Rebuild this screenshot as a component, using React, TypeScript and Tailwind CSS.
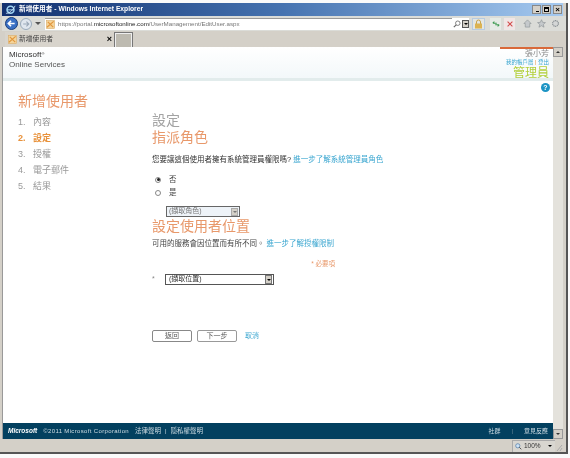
import React from "react";

const font = "font-['Liberation_Sans','Noto_Sans_CJK_TC',sans-serif]";

function Step({ n, t, active }: { n: string; t: string; active?: boolean }) {
  return (
    <div className={`flex h-4 items-center text-[9px] ${active ? "font-bold text-[#e8923c]" : "text-[#999]"}`}>
      <span className="w-[15px]">{n}</span>
      <span>{t}</span>
    </div>
  );
}

function Radio({ on, label }: { on?: boolean; label: string }) {
  return (
    <div className="flex h-[13px] items-center text-[7.5px] text-[#444]">
      <span className="flex h-[6px] w-[6px] items-center justify-center rounded-full border border-[#888] bg-white">
        {on && <span className="h-[3px] w-[3px] rounded-full bg-[#222]" />}
      </span>
      <span className="ml-[8px]">{label}</span>
    </div>
  );
}

function IEIcon() {
  return (
    <svg width="11" height="11" viewBox="0 0 12 12">
      <circle cx="6" cy="6.2" r="3.8" fill="none" stroke="#9fd3f2" strokeWidth="1.7" />
      <path d="M2.2 6.4h7.4" stroke="#9fd3f2" strokeWidth="1.2" />
      <path d="M1 10c2 1 7-2 10-8" fill="none" stroke="#d9eefa" strokeWidth="0.9" />
    </svg>
  );
}

function Favicon() {
  return (
    <svg width="9" height="9" viewBox="0 0 10 10" className="shrink-0">
      <rect x="0.5" y="0.5" width="9" height="9" fill="#f4d49a" stroke="#d9a860" strokeWidth="0.6" />
      <path d="M1 8 8.500 1.500M2 2l6 6" stroke="#e2963c" strokeWidth="1.300" />
    </svg>
  );
}

export default function App() {
  return (
    <div className={`${font} flex h-[458px] w-[570px] flex-col bg-[#fafafa] pb-[4px] pr-[2px] pt-[3px] blur-[0.35px]`}>
      <div className="flex min-h-0 flex-1 flex-col border-b-2 border-r-2 border-[#555] bg-[#d4d0c8] pl-[2px] pr-[3px]">
        {/* Title bar */}
        <div className="flex h-[13px] shrink-0 items-center bg-gradient-to-r from-[#12306f] via-[#4673b0] to-[#a6caf0] pl-[3px] pr-[1px]">
          <IEIcon />
          <span className="ml-[3px] text-[6.7px] font-bold text-white">新增使用者 - Windows Internet Explorer</span>
          <div className="ml-auto flex items-center gap-px">
            <span className="flex h-[9px] w-[9px] items-end justify-center border border-[#888] bg-[#d4d0c8] pl-px text-[6px] leading-none text-black"><span className="mb-px h-px w-[3px] bg-black" /></span>
            <span className="flex h-[9px] w-[9px] items-center justify-center border border-[#888] bg-[#d4d0c8]"><span className="h-[5px] w-[5px] border border-t-2 border-black" /></span>
            <span className="ml-px flex h-[9px] w-[9px] items-center justify-center border border-[#888] bg-[#d4d0c8] text-[8px] font-bold leading-none text-black">×</span>
          </div>
        </div>
        {/* Address bar */}
        <div className="-mr-[3px] flex h-[15px] shrink-0 items-center bg-[#dbdcd8] pl-[3px] pr-[6px]">
          <span className="flex h-[13px] w-[13px] shrink-0 items-center justify-center rounded-full border border-[#1b3f7c] bg-[#3a70c4]">
            <svg width="9" height="9" viewBox="0 0 10 10"><path d="M8.500 5H2M4.500 2 1.500 5l3 3" fill="none" stroke="#fff" strokeWidth="1.800" /></svg>
          </span>
          <span className="ml-[2px] flex h-[12px] w-[12px] shrink-0 items-center justify-center rounded-full border border-[#9ab] bg-[#dfe6ee]">
            <svg width="8" height="8" viewBox="0 0 10 10"><path d="M1.500 5H8M5.500 2l3 3-3 3" fill="none" stroke="#9aa8b8" strokeWidth="1.400" /></svg>
          </span>
          <span className="ml-[3px] h-0 w-0 border-x-[3px] border-t-[3px] border-x-transparent border-t-[#555]" />
          <div className="ml-[4px] flex h-[12px] flex-1 items-center border-t border-[#999] bg-white pl-px">
            <Favicon />
            <span className="ml-[3px] text-[6.2px] text-[#777]">https://portal.<span className="text-[#222]">microsoftonline.com</span>/UserManagement/EditUser.aspx</span>
            <div className="ml-auto flex items-center bg-[#dbdcd8]">
              <span className="flex h-[12px] items-center bg-white pl-[1px]">
                <svg width="8" height="8" viewBox="0 0 10 10"><circle cx="6" cy="4" r="2.800" fill="none" stroke="#666" /><path d="M4 6 1 9" stroke="#666" strokeWidth="1.400" /></svg>
                <span className="ml-px flex h-[8px] w-[7px] items-center justify-center border border-[#555] bg-[#d4d0c8]"><span className="h-0 w-0 border-x-[2px] border-t-[2px] border-x-transparent border-t-black" /></span>
              </span>
              <span className="ml-[3px] flex h-[12px] w-[13px] items-center justify-center border border-[#b8cbe0] bg-[#e4e6e2]">
                <svg width="9" height="10" viewBox="0 0 9 10"><path d="M2.500 5V3a2 2 0 0 1 4 0v2" fill="none" stroke="#c9a24a" /><rect x="1" y="4.500" width="7" height="5" fill="#dcb352" /></svg>
              </span>
              <span className="ml-[5px] flex h-[12px] w-[11px] items-center justify-center bg-[#e6ebe6]">
                <svg width="8" height="8" viewBox="0 0 10 10"><path d="M1 4h5M1 4l2-2M9 6H4M9 6 7 8" fill="none" stroke="#3c9a50" strokeWidth="1.300" /></svg>
              </span>
              <span className="ml-[3px] flex h-[12px] w-[11px] items-center justify-center bg-[#f0e6e6]">
                <svg width="8" height="8" viewBox="0 0 10 10"><path d="m2 2 6 6M8 2 2 8" stroke="#d24a4a" strokeWidth="1.300" /></svg>
              </span>
            </div>
          </div>
          <div className="flex items-center gap-[5px] bg-[#dbdcd8] pl-[8px]">
            <svg width="9" height="9" viewBox="0 0 10 10"><path d="M5 1 1 5h1.500v4h5V5H9Z" fill="#c5c9cc" stroke="#8c9296" strokeWidth="0.700" /></svg>
            <svg width="9" height="9" viewBox="0 0 10 10"><path d="m5 .8 1.300 2.900 3.100.3-2.400 2 .8 3.100L5 7.400 2.200 9.100l.8-3.100-2.400-2 3.100-.3Z" fill="#c5c9cc" stroke="#8c9296" strokeWidth="0.700" /></svg>
            <svg width="9" height="9" viewBox="0 0 10 10"><circle cx="5" cy="5" r="3.200" fill="#d4d6d6" stroke="#8c9296" strokeWidth="1.300" strokeDasharray="1.400 .6" /></svg>
          </div>
        </div>
        {/* Tab strip */}
        <div className="flex h-[16px] shrink-0 items-end bg-[#d4d0c8] pl-[3px]">
          <div className="flex h-[15px] w-[109px] items-center bg-[#d8d4cc] pl-[3px] pr-[2px]">
            <Favicon />
            <span className="ml-[2px] text-[6.8px] text-[#444]">新增使用者</span>
            <span className="ml-auto text-[9px] font-bold leading-none text-black">×</span>
          </div>
          <span className="ml-px h-[14px] w-[17px] border border-b-0 border-[#eee] bg-[#bdbab0] outline outline-1 outline-[#777]" />
        </div>
        {/* Viewport */}
        <div className="flex min-h-0 flex-1">
          <div className="flex min-w-0 flex-1 flex-col border-l border-[#999] bg-white">
            {/* Header */}
            <div className="flex h-[34px] shrink-0 justify-between border-b-[3px] border-[#e2ecec] bg-gradient-to-b from-white to-[#f3f8fa] pl-[6px]">
              <div className="pt-[3px] text-[8px] leading-[10px] text-[#333]">
                <div>Microsoft<sup className="text-[4px]">®</sup></div>
                <div className="text-[#555]">Online Services</div>
              </div>
              <div className="flex w-[53px] flex-col items-end border-t-2 border-[#d9693a] pr-[4px]">
                <span className="text-[8px] leading-[9px] text-[#888]">張小芳</span>
                <span className="whitespace-nowrap text-[5.5px] leading-[9px] text-[#3aa6d0]">我的帳戶層 <span className="text-[#e8923c]">|</span> 登出</span>
                <span className="text-[12px] font-normal leading-[12px] text-[#b2cf3a]">管理員</span>
              </div>
            </div>
            {/* Help */}
            <div className="flex h-[12px] shrink-0 items-center justify-end pr-[3px]">
              <span className="flex h-[9px] w-[9px] items-center justify-center rounded-full bg-[#1c94c4] text-[7px] font-bold leading-none text-white">?</span>
            </div>
            {/* Body */}
            <div className="flex min-h-0 flex-1 pl-[15px]">
              <div className="w-[134px] shrink-0">
                <div className="text-[14px] leading-[17px] text-[#e8986a]">新增使用者</div>
                <div className="mt-[5px]">
                  <Step n="1." t="內容" />
                  <Step n="2." t="設定" active />
                  <Step n="3." t="授權" />
                  <Step n="4." t="電子郵件" />
                  <Step n="5." t="結果" />
                </div>
              </div>
              <div className="min-w-0 flex-1 pt-[20px]">
                <div className="text-[14px] leading-[15px] text-[#a3a3a3]">設定</div>
                <div className="text-[14px] leading-[18px] text-[#e8986a]">指派角色</div>
                <div className="mt-[9px] text-[7.5px] leading-[10px] text-[#333]">
                  您要讓這個使用者擁有系統管理員權限嗎? <span className="text-[#3aa6d0]">進一步了解系統管理員角色</span>
                </div>
                <div className="mt-[8px] pl-[3px]">
                  <Radio on label="否" />
                  <Radio label="是" />
                </div>
                <div className="ml-[14px] mt-[7px] flex h-[11px] w-[74px] items-center justify-between border border-[#666] bg-[#eef3f8] pl-[2px] pr-px text-[7px] text-[#777]">
                  <span>(擷取角色)</span>
                  <span className="flex h-[8px] w-[7px] items-center justify-center border border-[#aaa] bg-[#d4d0c8]"><span className="h-0 w-0 border-x-[2px] border-t-[2px] border-x-transparent border-t-[#777]" /></span>
                </div>
                <div className="mt-[1px] text-[14px] leading-[17px] text-[#e8986a]">設定使用者位置</div>
                <div className="mt-[4px] text-[7.5px] leading-[10px] text-[#444]">
                  可用的服務會因位置而有所不同。 <span className="text-[#3aa6d0]">進一步了解授權限制</span>
                </div>
                <div className="mt-[10px] w-[183px] text-right text-[6.5px] leading-[10px] text-[#e8986a]">* 必要項</div>
                <div className="mt-[5px] flex items-center">
                  <span className="w-[13px] text-[7px] text-[#888]">*</span>
                  <div className="flex h-[11px] w-[109px] items-center justify-between border border-[#555] bg-white pl-[3px] pr-px text-[7px] text-[#333]">
                    <span>(擷取位置)</span>
                    <span className="flex h-[9px] w-[7px] items-center justify-center border border-[#777] bg-[#d4d0c8]"><span className="h-0 w-0 border-x-[2px] border-t-[2px] border-x-transparent border-t-black" /></span>
                  </div>
                </div>
                <div className="mt-[45px] flex items-center">
                  <span className="flex h-[12px] w-[40px] items-center justify-center rounded-[2px] border border-[#888] bg-white text-[7px] text-[#555]">返回</span>
                  <span className="ml-[5px] flex h-[12px] w-[40px] items-center justify-center rounded-[2px] border border-[#999] bg-white text-[7px] text-[#555]">下一步</span>
                  <span className="ml-[8px] text-[7px] text-[#3aa6d0]">取消</span>
                </div>
              </div>
            </div>
            {/* Footer */}
            <div className="flex h-[16px] shrink-0 items-center bg-[#03405f] pl-[5px] pr-[5px] text-[6px] text-[#cfdde4]">
              <span className="text-[6.5px] font-bold italic text-white">Microsoft</span>
              <span className="ml-[6px] tracking-[0.35px]">©2011 Microsoft Corporation</span>
              <span className="ml-[6px] text-[6.5px]">法律聲明</span>
              <span className="mx-[4px]">|</span>
              <span className="text-[6.5px]">隱私權聲明</span>
              <span className="ml-auto">社群</span>
              <span className="mx-[11px] text-[#6a8a9a]">|</span>
              <span>意見反應</span>
            </div>
          </div>
          {/* Scrollbar */}
          <div className="flex w-[10px] shrink-0 flex-col justify-between bg-[#e4e2dc]">
            <span className="flex h-[10px] items-center justify-center border border-[#999] bg-[#d4d0c8]"><span className="h-0 w-0 border-x-[2px] border-b-[2px] border-x-transparent border-b-[#333]" /></span>
            <span className="flex h-[10px] items-center justify-center border border-[#999] bg-[#d4d0c8]"><span className="h-0 w-0 border-x-[2px] border-t-[2px] border-x-transparent border-t-[#333]" /></span>
          </div>
        </div>
        {/* Status bar */}
        <div className="flex h-[13px] shrink-0 items-center justify-end bg-[#d4d0c8]">
          <div className="flex h-[12px] w-[43px] items-center border-l border-t border-[#aaa] bg-[#d8d6d0] pl-[2px] text-[6.5px] text-[#333]">
            <svg width="7" height="7" viewBox="0 0 10 10"><circle cx="4" cy="4" r="3" fill="#cfe2f3" stroke="#4a78a8" /><path d="m6 6 3 3" stroke="#555" strokeWidth="1.400" /></svg>
            <span className="ml-[2px]">100%</span>
            <span className="ml-[7px] h-0 w-0 border-x-[2px] border-t-[2px] border-x-transparent border-t-black" />
          </div>
          <svg width="8" height="10" viewBox="0 0 8 10" className="self-end">
            <path d="M7 3 2 9M7 6 5 9" stroke="#aaa" strokeWidth="1" />
          </svg>
        </div>
      </div>
    </div>
  );
}
